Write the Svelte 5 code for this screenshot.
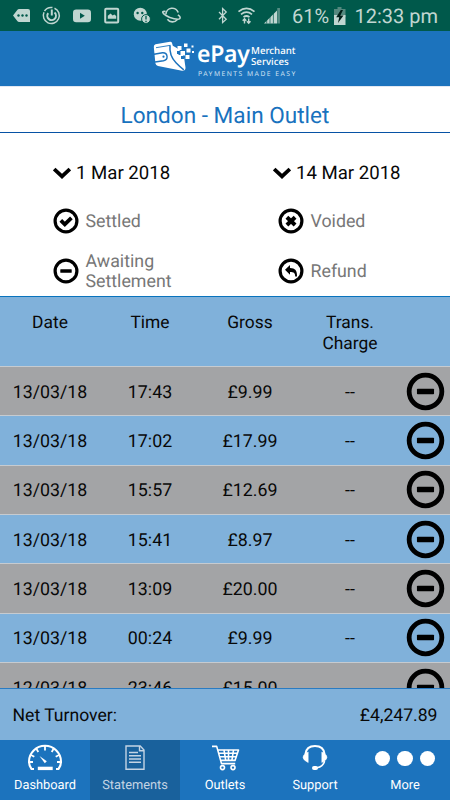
<script>
  const rows = [
    ['13/03/18', '17:43', '£9.99'],
    ['13/03/18', '17:02', '£17.99'],
    ['13/03/18', '15:57', '£12.69'],
    ['13/03/18', '15:41', '£8.97'],
    ['13/03/18', '13:09', '£20.00'],
    ['13/03/18', '00:24', '£9.99'],
    ['12/03/18', '23:46', '£15.00']
  ];
  const legend = [
    { kind: 'check', label: 'Settled' },
    { kind: 'cross', label: 'Voided' },
    { kind: 'minus', label: 'Awaiting Settlement' },
    { kind: 'back', label: 'Refund' }
  ];
  const tabs = ['Dashboard', 'Statements', 'Outlets', 'Support', 'More'];
</script>

{#snippet ring(kind)}
  <svg class="ring" viewBox="0 0 26 26">
    <circle cx="13" cy="13" r="10.9" fill="none" stroke="#000" stroke-width="3.2" />
    {#if kind === 'check'}
      <path d="M7.8 12.4l4 4 6.6-6.6" fill="none" stroke="#000" stroke-width="3.8" />
    {:else if kind === 'cross'}
      <path d="M8.9 9.2l8.2 7.8M17.1 9.2L8.9 17" fill="none" stroke="#000" stroke-width="4" />
    {:else if kind === 'minus'}
      <rect x="7.3" y="11.2" width="11.4" height="3.6" rx=".5" />
    {:else}
      <path d="M7 11.8l5-4.7v2.8c5.2 0 7.3 2.7 7 8.5h-1.8c0-3.6-1.6-4.4-5.2-4.4v2.7z" />
    {/if}
  </svg>
{/snippet}

<div class="screen">
  <div class="status">
    <svg class="notes" viewBox="0 0 190 31" fill="#c0d6d1">
      <path d="M13 15.5l4.3-5.6q.6-.9 1.8-.9H28q2 0 2 2v11H19.1q-1.2 0-1.8-.9z" />
      <g fill="#00594b"><circle cx="18.5" cy="15.5" r="1.2" /><circle cx="22.5" cy="15.5" r="1.2" /><circle cx="26.5" cy="15.5" r="1.2" /></g>
      <g fill="none" stroke="#c0d6d1">
        <path d="M44 12.2A8 8 0 1 0 54.5 8.2" stroke-width="1.5" />
        <path d="M44.5 11A8 8 0 0 1 52.5 7.6" stroke-width="1.5" />
        <path d="M48.2 13.2A4.3 4.3 0 1 0 54.5 12.6" stroke-width="2" />
        <path d="M51.8 9.5v6" stroke-width="2" />
      </g>
      <rect x="73" y="9.5" width="18" height="12.8" rx="3.2" />
      <path d="M80 12.7v6l4.8-3z" fill="#00594b" />
      <rect x="105.2" y="8.7" width="13" height="13.8" rx="1" fill="none" stroke="#c0d6d1" stroke-width="2" />
      <path d="M107.8 18.8v-3l2.8-2.2 2 2 1.8-1 1.8 1.5v2.7z" />
      <circle cx="140.3" cy="14.2" r="6.5" /><circle cx="146" cy="19" r="4.4" stroke="#00594b" stroke-width="1" />
      <circle cx="137.6" cy="13" r="1.2" fill="#00594b" /><circle cx="142.3" cy="13" r="1.2" fill="#00594b" />
      <path d="M146 16v3.6M146 20.8v1.2" stroke="#00594b" stroke-width="1.3" />
      <g fill="none" stroke="#c0d6d1" stroke-width="1.6">
        <path d="M165.9 14.2a6.3 6.3 0 0 1 12.3-1.6M167.4 19.2a6.2 6.2 0 0 0 9.8.5" />
        <path d="M165.6 11.5c-4.2-.6-3.6 1.3.4 4 4.6 3 12.4 4.8 13.9 2.9.8-1-.3-2.4-2-3.6" />
      </g>
    </svg>
    <svg class="signals" viewBox="0 0 70 31" fill="none" stroke="#c0d6d1">
      <path d="M5 12l7.2 7.2-3.6 3.4V8.6l3.6 3.4L5 19.2" stroke-width="1.3" />
      <path d="M24.5 11.6q8-6.5 16 0M27 14.4q5.5-4.4 11 0M29.5 17.2q3-2.4 6 0" stroke-width="1.7" />
      <path d="M30.5 23.4v-4.2M34.7 18.6v4.3M28.7 20.8l1.8-2 1.8 2M32.9 21.3l1.8 2 1.8-2" stroke-width="1.4" />
      <path d="M50 23.5h13V10.5z" fill="#c0d6d1" stroke="none" />
      <path d="M52.7 23.5v-6M56 23.5v-10M59.4 23.5v-12" stroke="#00594b" stroke-width=".7" />
      <path d="M64.6 23.5V8" stroke="#558e84" stroke-width="2.7" />
    </svg>
    <span class="pct">61%</span>
    <svg class="battery" viewBox="0 0 14 20">
      <path d="M4.5 1h4v2h4v8H1V3h3.5z" fill="#54887e" /><path d="M1 9h11.5v10H1z" fill="#c0d6d1" />
      <path d="M7.8 4L3.2 11.2h3L5 17l5.5-7.4H7.3L10 4z" fill="#001e18" />
    </svg>
    <span class="clock">12:33 pm</span>
  </div>

  <header>
    <svg class="wallet" viewBox="0 0 44 38" fill="#fff">
      <path d="M2.5 3.2L17 .8q1.6-.2 2 1.2l.8 2.8Q29 9 31.2 17.5l1.3 9q.2 3.5-3.5 3.3L5 25q-2.2-.5-2.6-2.7L.8 6Q.7 3.8 2.5 3.2z" />
      <g fill="none" stroke="#1c73bd">
        <path d="M3 6.7l14.5-2.4" stroke-width=".9" />
        <path d="M1 13.2l8.5-1.5c5.5-.3 6.3 7 1 8L2 21" stroke-width="1.4" />
        <path d="M17 4.5q-1 10 6 17.3 4 4.2 7.8 7" stroke-width="1.5" />
      </g>
      <circle cx="10.5" cy="15.7" r="1.1" fill="#1c73bd" />
      <path d="M24 10h4v4h-4zM28 15h3v3h-3z" fill="#1c73bd" />
      <path d="M24.5 5h4v4h-4zM27.5 10h4.5v4.5h-4.5zM32.5 14h4v4h-4zM31 2.5h3.5V6H31zM33.5 7.5h4v4h-4zM38.5 4.5h2v2h-2zM39 10h2v2h-2zM23.5 13h2v2h-2z" />
    </svg>
    <div class="brand">
      <div class="name"><b>ePay</b><span>Merchant<br />Services</span></div>
      <small>PAYMENTS MADE EASY</small>
    </div>
  </header>

  <h1>London - Main Outlet</h1>

  <section class="filters">
    {#each ['1 Mar 2018', '14 Mar 2018'] as date}
      <div class="date">
        <svg viewBox="0 0 18 12"><path d="M1.2 2L9 9.4 16.8 2" fill="none" stroke="#000" stroke-width="3.7" /></svg>
        <span>{date}</span>
      </div>
    {/each}
    {#each legend as item}
      <div class="key">{@render ring(item.kind)}<span>{item.label}</span></div>
    {/each}
  </section>

  <div class="head">
    <span>Date</span><span>Time</span><span>Gross</span><span>Trans.<br />Charge</span>
  </div>
  <div class="list">
    {#each rows as row}
      <div class="row">
        {#each row as cell}<span>{cell}</span>{/each}
        <span class="dash">--</span>
        <div class="state">{@render ring('minus')}</div>
      </div>
    {/each}
  </div>

  <div class="total"><span>Net Turnover:</span><span>£4,247.89</span></div>

  <nav>
    {#each tabs as tab}
      <div class="tab" class:active={tab === 'Statements'}>
        {#if tab === 'Dashboard'}
          <svg viewBox="0 0 36 28" fill="none" stroke="#fff">
            <path d="M7 25H4.5Q2 22 2 17.5a16 15.7 0 0 1 32 0q0 4.5-2.5 7.5H29" stroke-width="2.1" stroke-linejoin="round" />
            <path d="M18 2v4.5M9.5 5l1.8 3M26.5 5l-1.8 3M4 11l3.3 1.7M32 11l-3.3 1.7M2 18h4M34 18h-4" stroke-width="1.8" />
            <path d="M12.5 24.4h11.5" stroke-width="3.4" stroke-linecap="square" />
            <path d="M12.5 12l7.3 5.2-2 2z" fill="#fff" stroke="none" />
          </svg>
        {:else if tab === 'Statements'}
          <svg viewBox="0 0 36 28" fill="none" stroke="#c4d4e4" stroke-width="1.4">
            <path d="M9 2h14.2L27 6v19.3H9z" /><path d="M22.5 2v4.8H27" />
            <path d="M12 8.5h9M12 11.8h12M12 15h12M12 18.2h12" />
          </svg>
        {:else if tab === 'Outlets'}
          <svg viewBox="0 0 36 28" fill="none" stroke="#fff" stroke-width="1.6">
            <path d="M5 2.4h4.7l4.8 17.2h13.7M11 6h20.5L28 16.4H14" stroke-linejoin="round" />
            <path d="M12 9.3h18.5M13 12.8h16.2M17 6l1.7 10.3M21.5 6v10.3M26.5 6l-1.6 10.3" />
            <circle cx="15.5" cy="23.6" r="2" /><circle cx="26" cy="23.6" r="2" />
          </svg>
        {:else if tab === 'Support'}
          <svg viewBox="0 0 36 28" fill="none" stroke="#fff">
            <path d="M8.5 10C9 5 12.5 2 18 2s9 3 9.5 8" stroke-width="2.1" />
            <path d="M11.2 8v10.6Q6 16 6 13.2T11.2 8zM24.8 8v10.6Q30 16 30 13.2T24.8 8z" fill="#fff" stroke-width=".5" />
            <path d="M27.5 17q-1 5.6-7.5 6.8" stroke-width="1.6" />
            <rect x="15" y="22" width="6" height="4" rx="2" fill="#fff" stroke="none" />
          </svg>
        {:else}
          <div class="dots"><i></i><i></i><i></i></div>
        {/if}
        <span>{tab}</span>
      </div>
    {/each}
  </nav>
</div>

<style>
  .screen { width: 450px; height: 800px; display: flex; flex-direction: column; overflow: hidden; background: #fff; color: #080808; font-family: Roboto, sans-serif; text-rendering: geometricPrecision; }
  .screen > * { box-sizing: border-box; flex: none; }
  .status { height: 31px; display: flex; align-items: center; background: #00594b; color: #c0d6d1; font-size: 20px; }
  .notes { width: 190px; height: 31px; flex: none; }
  .signals { width: 70px; height: 31px; margin-left: 24px; flex: none; }
  .pct { width: 41px; margin-left: 8px; line-height: 31px; padding-top: 1px; }
  .battery { width: 14px; height: 20px; flex: none; }
  .clock { margin-left: 7.5px; padding-top: 1px; white-space: nowrap; }
  header { height: 55px; display: flex; background: #1c73bd; color: #fff; }
  .wallet { width: 44px; height: 38px; margin: 10px 0 0 153px; }
  .brand { font-family: 'Noto Sans', sans-serif; padding-top: 8px; }
  .name { display: flex; height: 30.5px; }
  .name b { width: 54px; font: 600 23px/29px 'Noto Sans', sans-serif; letter-spacing: -.3px; }
  .name span { font: 500 9.7px/11.5px 'Noto Sans', sans-serif; padding-top: 5.5px; }
  small { display: block; font-size: 6.8px; line-height: 8px; padding-left: 1px; letter-spacing: 1.45px; color: #cfe2f2; white-space: nowrap; }
  h1 { height: 47px; margin: 0; padding-top: 6px; border-top: 1px solid #e2e8f2; border-bottom: 1px solid #0752a5; color: #1872be; font-size: 22.6px; font-weight: 400; line-height: 46px; text-align: center; }
  .filters { height: 163px; display: grid; grid-template-columns: 225px 225px; grid-template-rows: 63px 50px 50px; }
  .date { display: flex; align-items: center; padding: 16px 0 0 53px; font-size: 18.6px; }
  .date:nth-child(2) { padding-left: 48px; }
  .date svg { width: 18px; height: 12px; margin-right: 5px; }
  .key { display: flex; align-items: center; gap: 7px; padding-left: 52.5px; color: #777; font-size: 17.8px; line-height: 20px; }
  .key span { width: 100px; padding-top: 2px; }
  .ring { display: block; width: 26px; height: 26px; flex: none; }
  .head { height: 70px; display: flex; padding-top: 16px; border-top: 1px solid #0873bd; background: #80b1da; font-size: 17.4px; line-height: 20.5px; text-align: center; }
  .head span, .row > span { width: 100px; text-align: center; }
  .list { height: 322px; overflow: hidden; }
  .row { box-sizing: border-box; height: 49.35px; display: flex; align-items: center; border-top: 1px solid #c6cbd0; background: #a3a4a6; font-size: 17.8px; padding-top: 2px; }
  .row:nth-child(even) { background: #80b1da; }
  .state { margin-left: 5.5px; margin-top: -2px; }
  .state .ring { width: 39px; height: 39px; }
  .total { height: 52px; display: flex; justify-content: space-between; align-items: center; border-top: 1px solid #2a7bc2; padding: 2px 12.5px 0; background: #80b1da; font-size: 17.6px; }
  nav { height: 60px; display: flex; background: #1c73bd; color: #fff; }
  .tab { width: 90px; height: 60px; display: flex; flex-direction: column; align-items: center; font-size: 12.8px; line-height: 16px; }
  .tab > svg { width: 36px; height: 28px; margin: 4px 0 5px; }
  .tab > span { padding-top: .6px; }
  .tab.active { background: #19619c; color: #c4d4e4; }
  .dots { height: 37px; display: flex; align-items: center; gap: 7px; }
  .dots i { width: 15.5px; height: 15.5px; border-radius: 50%; background: #fff; }
</style>
